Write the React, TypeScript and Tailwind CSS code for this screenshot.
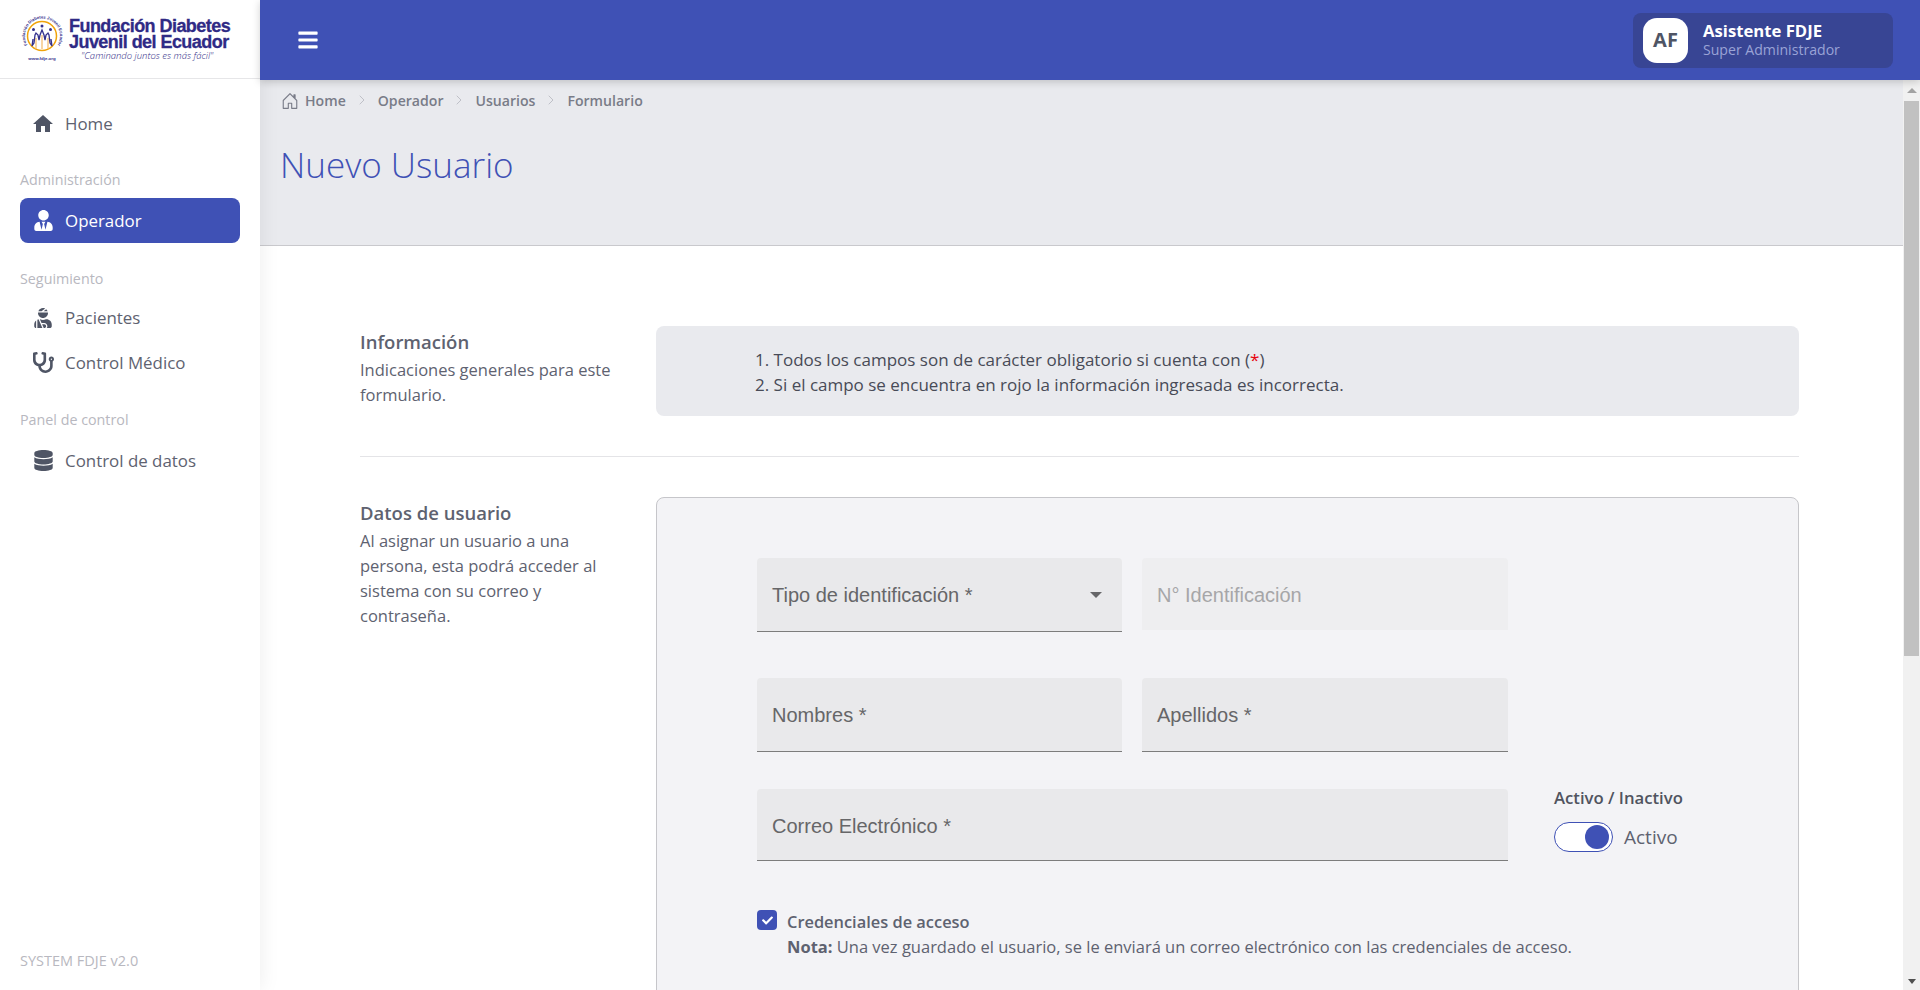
import type { ReactNode } from "react"
import { BsHouseDoor } from "react-icons/bs"
import { FaBars, FaDatabase, FaStethoscope, FaUserInjured, FaUserTie, FaCheck } from "react-icons/fa"
import { MdHome } from "react-icons/md"
import { ChevronRight } from "lucide-react"

function Logo() {
  return (
    <div className="flex h-[79px] items-center border-b border-[#e6e6e8] pl-[20px]">
      <svg width="49" height="50" viewBox="0 0 49 50" className="shrink-0">
        <defs>
          <path id="logo-ring" d="M7.5 31A17.5 17.5 0 1 1 37.5 31" fill="none" />
        </defs>
        <text fontSize="4.2" fontWeight="700" fill="#34318c" fontFamily="Liberation Sans, sans-serif">
          <textPath href="#logo-ring">Fundación Diabetes Juvenil Ecuador</textPath>
        </text>
        <circle cx="22" cy="22" r="14.5" fill="#fff" stroke="#f0a30a" strokeWidth="1.5" />
        <path d="M16 24v11M22 21v14M28 24v11" stroke="#f3b968" strokeWidth="1.2" fill="none" />
        <path d="M13 25l-1 7 2-3 1-8 1-2 2 2 1 5 1-5 2-5 2 5 1 5 1-5 2-2 1 2 1 8 2 3-1-7" stroke="#34318c" strokeWidth="1.3" fill="none" />
        <circle cx="13.5" cy="15.5" r="1.5" fill="#34318c" />
        <circle cx="22" cy="12" r="1.5" fill="#34318c" />
        <circle cx="30.5" cy="15.5" r="1.5" fill="#34318c" />
        <text x="22" y="46" textAnchor="middle" fontSize="4.4" fontWeight="700" fill="#34318c" fontFamily="Liberation Sans, sans-serif">
          www.fdje.org
        </text>
      </svg>
      <div className="flex flex-col text-[#2f2a85] font-['Liberation_Sans',sans-serif]">
        <span className="text-[18px] leading-[16px] font-bold tracking-[-0.55px] whitespace-nowrap [-webkit-text-stroke:0.3px_#2f2a85]">Fundación Diabetes</span>
        <span className="text-[18px] leading-[16px] font-bold tracking-[-0.55px] whitespace-nowrap [-webkit-text-stroke:0.3px_#2f2a85]">Juvenil del Ecuador</span>
        <span className="ml-[12px] mt-[1px] text-[9.5px] leading-[10px] italic font-light whitespace-nowrap font-['Open_Sans',sans-serif]">"Caminando juntos es más fácil"</span>
      </div>
    </div>
  )
}

function NavItem({ icon, label, active }: { icon: ReactNode; label: string; active?: boolean }) {
  return (
    <div
      className={`mx-5 flex h-[45px] items-center rounded-lg pl-[13px] text-[16.9px] ${
        active ? "bg-[#3f51b5] text-white" : "text-[#5e6270]"
      }`}
    >
      <span className={`flex w-[20px] justify-center [&>svg]:shrink-0 ${active ? "text-white" : "text-[#4f5565]"}`}>{icon}</span>
      <span className="ml-[12px]">{label}</span>
    </div>
  )
}

function Sidebar() {
  return (
    <aside className="z-10 flex w-[260px] shrink-0 flex-col bg-white shadow-[0_0_20px_rgba(0,0,0,0.08)]">
      <Logo />
      <nav className="flex flex-1 flex-col pt-[22px]">
        <NavItem icon={<MdHome size={24} />} label="Home" />
        <p className="mx-5 mt-[24px] mb-[8px] text-[14.3px] leading-[20px] text-[#b8b8c0]">Administración</p>
        <NavItem icon={<FaUserTie size={21} />} label="Operador" active />
        <p className="mx-5 mt-[26px] mb-[6px] text-[14.3px] leading-[20px] text-[#b8b8c0]">Seguimiento</p>
        <NavItem icon={<FaUserInjured size={20} />} label="Pacientes" />
        <NavItem icon={<FaStethoscope size={21} />} label="Control Médico" />
        <p className="mx-5 mt-[25px] mb-[8px] text-[14.3px] leading-[20px] text-[#b8b8c0]">Panel de control</p>
        <NavItem icon={<FaDatabase size={21} />} label="Control de datos" />
        <p className="mx-5 mt-auto mb-[19px] text-[14.5px] leading-[20px] text-[#b8b8c0]">SYSTEM FDJE v2.0</p>
      </nav>
    </aside>
  )
}

function Header() {
  return (
    <header className="z-20 flex h-[80px] shrink-0 items-center justify-between bg-[#3f51b5] pr-[27px] pl-[37px] shadow-[0_2px_8px_rgba(0,0,0,0.18)]">
      <FaBars size={22} className="text-white" />
      <div className="flex h-[55px] w-[260px] items-center rounded-lg bg-[#384594] pl-[10px]">
        <div className="flex h-[45px] w-[45px] items-center justify-center rounded-[14px] bg-white text-[20px] font-bold text-[#4f5565]">
          AF
        </div>
        <div className="ml-[15px] flex flex-col">
          <span className="text-[16.7px] leading-[20px] font-bold text-white">Asistente FDJE</span>
          <span className="text-[14.1px] leading-[18px] text-[#9aa3d6]">Super Administrador</span>
        </div>
      </div>
    </header>
  )
}

function PageHead() {
  const crumbs = ["Operador", "Usuarios", "Formulario"]
  return (
    <div className="h-[166px] border-b border-[#c9c9cd] bg-[#e9eaee] pl-[21px]">
      <div className="flex h-[41px] items-center text-[14.1px] font-semibold text-[#797c88]">
        <BsHouseDoor size={18} className="mr-[6px]" />
        <span>Home</span>
        {crumbs.map((c) => (
          <span key={c} className="flex items-center">
            <ChevronRight size={16} strokeWidth={1} className="mx-[8px] text-[#a9abb3]" />
            {c}
          </span>
        ))}
      </div>
      <h1 className="mt-[22px] -ml-[1px] text-[35px] leading-[44px] font-light text-[#3f51b5]">Nuevo Usuario</h1>
    </div>
  )
}

function Field({ label, disabled, select, className }: { label: string; disabled?: boolean; select?: boolean; className: string }) {
  return (
    <div
      className={`flex items-center justify-between rounded-t-[4px] pr-[20px] pl-[15px] font-['Liberation_Sans',sans-serif] text-[20px] ${
        disabled ? "bg-[#eeeef0] text-[#a6a6a8]" : "border-b border-[#7c7c7c] bg-[#e9e9eb] text-[#666668]"
      } ${className}`}
    >
      <span>{label}</span>
      {select && <span className="h-0 w-0 border-x-[6px] border-t-[6px] border-x-transparent border-t-[#666668]" />}
    </div>
  )
}

function Form() {
  return (
    <div className="pr-[104px] pl-[100px] pt-[80px] text-[#5e6270]">
      <section className="flex border-b border-[#e4e4e7] pb-[40px]">
        <div className="w-[296px] shrink-0 pt-[4px]">
          <h2 className="mb-[3px] text-[18.5px] leading-[24px] font-semibold">Información</h2>
          <p className="w-[260px] text-[16.5px] leading-[25px]">Indicaciones generales para este formulario.</p>
        </div>
        <div className="flex h-[90px] flex-1 flex-col justify-center rounded-lg bg-[#e9eaee] pt-[2px] pl-[99px] text-[17px] leading-[25px] text-[#484b57]">
          <p>
            1. Todos los campos son de carácter obligatorio si cuenta con (<span className="text-red-600">*</span>)
          </p>
          <p>2. Si el campo se encuentra en rojo la información ingresada es incorrecta.</p>
        </div>
      </section>
      <section className="flex pt-[40px]">
        <div className="w-[296px] shrink-0 pt-[4px]">
          <h2 className="mb-[3px] text-[18.5px] leading-[24px] font-semibold">Datos de usuario</h2>
          <p className="w-[250px] text-[16.5px] leading-[25px]">
            Al asignar un usuario a una persona, esta podrá acceder al sistema con su correo y contraseña.
          </p>
        </div>
        <div className="h-[600px] flex-1 rounded-lg border border-[#c6c6ca] bg-[#f3f3f6] pt-[60px] pl-[100px]">
          <div className="flex gap-[20px]">
            <Field label="Tipo de identificación *" select className="h-[74px] w-[365px] mb-[-2px]" />
            <Field label="N° Identificación" disabled className="h-[72px] w-[366px] pt-[2px]" />
          </div>
          <div className="mt-[48px] flex gap-[20px]">
            <Field label="Nombres *" className="h-[74px] w-[365px]" />
            <Field label="Apellidos *" className="h-[74px] w-[366px]" />
          </div>
          <div className="mt-[37px] flex">
            <Field label="Correo Electrónico *" className="h-[72px] w-[751px] pt-[2px]" />
            <div className="ml-[46px] -mt-[1px]">
              <p className="text-[16.7px] leading-[20px] font-semibold text-[#50535f]">Activo / Inactivo</p>
              <div className="mt-[14px] flex items-center">
                <div className="flex h-[30px] w-[59px] items-center justify-end rounded-[15px] border border-[#3f51b5] bg-white pr-[3px]">
                  <span className="h-[24px] w-[24px] rounded-full bg-[#3f51b5]" />
                </div>
                <span className="ml-[11px] text-[19px] text-[#5e6270]">Activo</span>
              </div>
            </div>
          </div>
          <div className="mt-[49px] flex">
            <span className="flex h-[20px] w-[20px] items-center justify-center rounded-[4px] bg-[#3f51b5]">
              <FaCheck size={11} className="text-white" />
            </span>
            <div className="ml-[10px] -mt-[1px]">
              <p className="text-[16.4px] leading-[25px] font-semibold">Credenciales de acceso</p>
              <p className="text-[16.5px] leading-[25px]">
                <b className="font-bold">Nota:</b> Una vez guardado el usuario, se le enviará un correo electrónico con las credenciales de acceso.
              </p>
            </div>
          </div>
        </div>
      </section>
    </div>
  )
}

function Scrollbar() {
  return (
    <div className="flex w-[17px] shrink-0 flex-col items-center bg-[#f1f1f1]">
      <div className="flex h-[21px] items-center justify-center">
        <span className="h-0 w-0 border-x-[5px] border-b-[5px] border-x-transparent border-b-[#a3a3a3]" />
      </div>
      <div className="h-[555px] w-[15px] bg-[#c1c1c1]" />
      <div className="mt-auto flex h-[17px] items-center justify-center">
        <span className="h-0 w-0 border-x-[4px] border-t-[5px] border-x-transparent border-t-[#505050]" />
      </div>
    </div>
  )
}

export default function App() {
  return (
    <div className="flex h-[990px] w-full overflow-hidden bg-white font-['Open_Sans',sans-serif]">
      <Sidebar />
      <div className="flex min-w-0 flex-1 flex-col">
        <Header />
        <div className="flex min-h-0 flex-1">
          <main className="min-w-0 flex-1 overflow-hidden">
            <PageHead />
            <Form />
          </main>
          <Scrollbar />
        </div>
      </div>
    </div>
  )
}
